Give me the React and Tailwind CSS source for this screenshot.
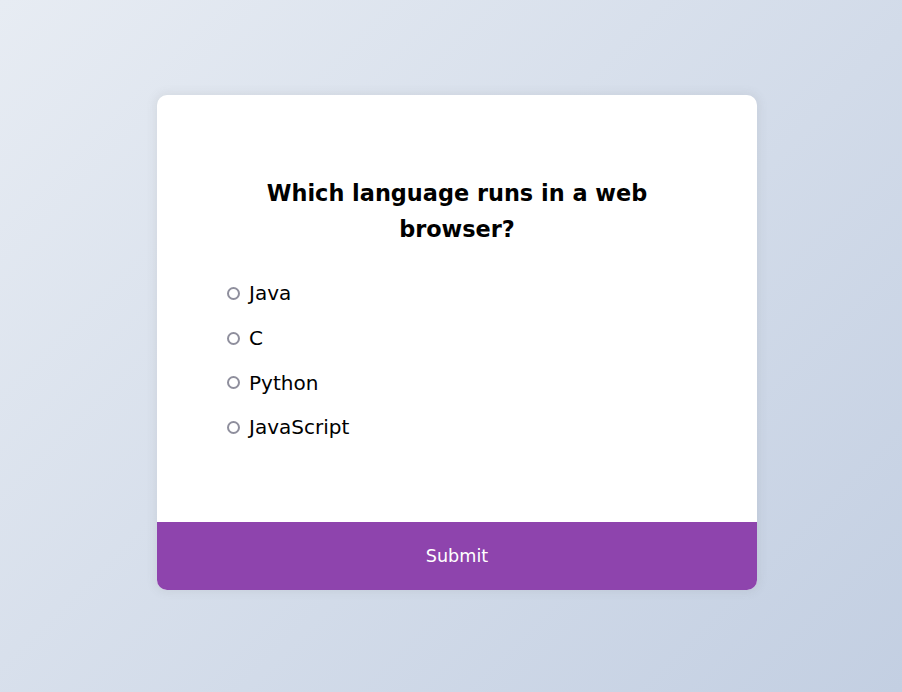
export default function App() {
  const options = ["Java", "C", "Python", "JavaScript"];
  return (
    <div className="min-h-[692px] w-full flex items-center justify-center pl-[12px] pb-[7px] bg-[linear-gradient(135deg,#e7ecf3_0%,#c3cfe2_100%)]" style={{ fontFamily: '"DejaVu Sans", sans-serif' }}>
      <div className="w-[600px] bg-white rounded-[10px] overflow-hidden shadow-[0_0_10px_2px_rgba(100,100,100,0.1)]">
        <div className="p-16">
          <h2 className="px-4 py-4 text-center text-[22.4px] leading-[36px] font-bold text-black m-0">
            Which language runs in a web browser?
          </h2>
          <ul className="m-0 p-0 list-none">
            {options.map((o) => (
              <li key={o} className="my-4 flex items-center text-[20px] leading-[28.8px] text-black">
                <span className="ml-[6px] w-[13px] h-[13px] rounded-full border-2 border-[#8f8f9d] bg-white shrink-0" />
                <span className="ml-[9px]">{o}</span>
              </li>
            ))}
          </ul>
        </div>
        <button className="block w-full bg-[#8e44ad] text-white text-[17.6px] leading-[26.4px] py-[20.8px] text-center">
          Submit
        </button>
      </div>
    </div>
  );
}
